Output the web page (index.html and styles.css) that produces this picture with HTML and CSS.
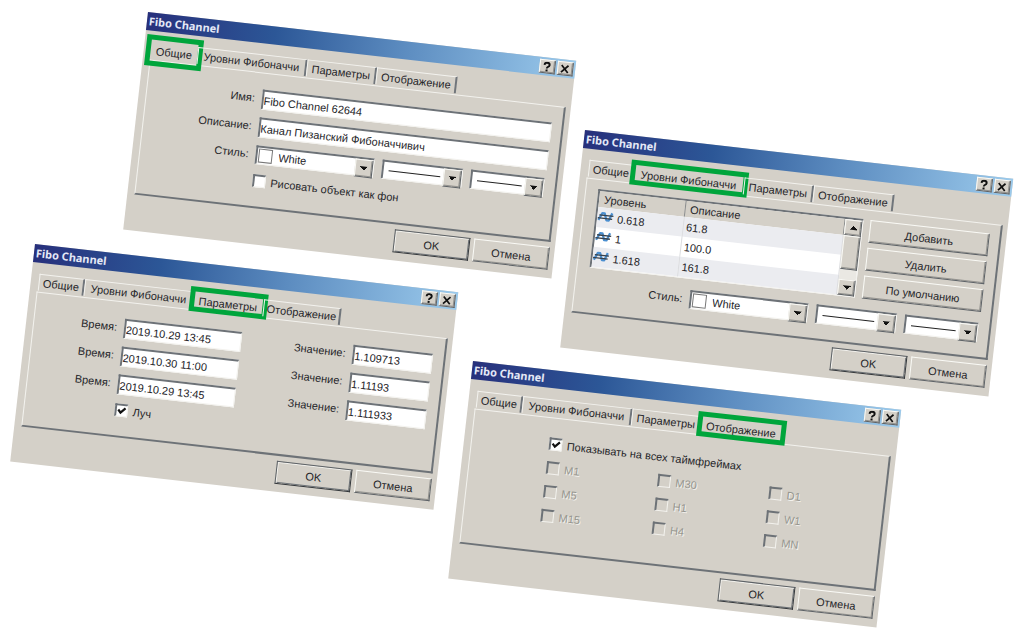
FILE: index.html
```html
<!DOCTYPE html>
<html lang="ru">
<head>
  <meta charset="UTF-8">
  <meta name="viewport" content="width=device-width, initial-scale=1.0">
  <title>Fibo Channel</title>
  <link rel="stylesheet" href="styles.css">
</head>
<body>
  <!-- Shared icons -->
  <svg class="sprite" aria-hidden="true">
    <symbol id="icon-help" viewBox="0 0 12 11">
      <path d="M3.5 3.6 Q3.5 1.2 6 1.2 Q8.6 1.2 8.6 3.3 Q8.6 4.6 7.2 5.2 Q6.1 5.8 6.1 7" fill="none" stroke="#111" stroke-width="1.9"/>
      <rect x="5.1" y="8" width="2" height="2" fill="#111"/>
    </symbol>
    <symbol id="icon-close" viewBox="0 0 12 11">
      <path d="M2.6 1.8 L9.4 9 M9.4 1.8 L2.6 9" fill="none" stroke="#111" stroke-width="1.7"/>
    </symbol>
    <symbol id="icon-level" viewBox="0 0 18 12">
      <path d="M1.5 10 L5 2.5 H7.5 L10 9.5 H12.5 L15.5 1.5" fill="none" stroke="#4a8fd0" stroke-width="2.4" stroke-linejoin="round"/>
      <path d="M2 4.6 H17 M0.5 7.8 H16" stroke="#37414c" stroke-width="1.4"/>
    </symbol>
  </svg>

  <main class="desktop">
    <!-- General -->
    <section class="dialog dialog-general">
      <header class="title-bar">
        <h2>Fibo Channel</h2>
        <button class="title-button" aria-label="Справка"><svg><use href="#icon-help"/></svg></button>
        <button class="title-button" aria-label="Закрыть"><svg><use href="#icon-close"/></svg></button>
      </header>
      <nav class="tabs">
        <button class="tab tab-1 active">Общие</button>
        <button class="tab tab-2">Уровни Фибоначчи</button>
        <button class="tab tab-3">Параметры</button>
        <button class="tab tab-4">Отображение</button>
      </nav>
      <div class="panel form">
        <label for="name">Имя:</label>
        <input class="field" id="name" type="text" value="Fibo Channel 62644">
        <label for="description">Описание:</label>
        <input class="field" id="description" type="text" value="Канал Пизанский Фибоначчивич">
        <label for="color-1">Стиль:</label>
        <div class="style-row">
          <span class="combo combo-color"><i class="swatch"></i><select id="color-1"><option>White</option></select></span>
          <span class="combo combo-line"><i class="line"></i><select aria-label="Тип линии"><option></option></select></span>
          <span class="combo combo-width"><i class="line"></i><select aria-label="Толщина"><option></option></select></span>
        </div>
        <label class="check"><input type="checkbox">Рисовать объект как фон</label>
      </div>
      <footer class="actions">
        <button class="button default">OK</button>
        <button class="button">Отмена</button>
      </footer>
    </section>

    <!-- Fibonacci levels -->
    <section class="dialog dialog-levels">
      <header class="title-bar">
        <h2>Fibo Channel</h2>
        <button class="title-button" aria-label="Справка"><svg><use href="#icon-help"/></svg></button>
        <button class="title-button" aria-label="Закрыть"><svg><use href="#icon-close"/></svg></button>
      </header>
      <nav class="tabs">
        <button class="tab tab-1">Общие</button>
        <button class="tab tab-2 active">Уровни Фибоначчи</button>
        <button class="tab tab-3">Параметры</button>
        <button class="tab tab-4">Отображение</button>
      </nav>
      <div class="panel">
        <div class="levels">
          <div class="list">
            <table>
              <thead>
                <tr><th>Уровень</th><th>Описание</th></tr>
              </thead>
              <tbody>
                <tr><td><svg class="level-icon"><use href="#icon-level"/></svg>0.618</td><td>61.8</td></tr>
                <tr><td><svg class="level-icon"><use href="#icon-level"/></svg>1</td><td>100.0</td></tr>
                <tr><td><svg class="level-icon"><use href="#icon-level"/></svg>1.618</td><td>161.8</td></tr>
              </tbody>
            </table>
            <div class="scrollbar">
              <button class="scroll-button up" aria-label="Вверх"></button>
              <div class="thumb"></div>
              <button class="scroll-button down" aria-label="Вниз"></button>
            </div>
          </div>
          <div class="level-buttons">
            <button class="button">Добавить</button>
            <button class="button">Удалить</button>
            <button class="button">По умолчанию</button>
          </div>
        </div>
        <div class="form">
          <label for="color-2">Стиль:</label>
          <div class="style-row">
            <span class="combo combo-color"><i class="swatch"></i><select id="color-2"><option>White</option></select></span>
            <span class="combo combo-line"><i class="line"></i><select aria-label="Тип линии"><option></option></select></span>
            <span class="combo combo-width"><i class="line"></i><select aria-label="Толщина"><option></option></select></span>
          </div>
        </div>
      </div>
      <footer class="actions">
        <button class="button default">OK</button>
        <button class="button">Отмена</button>
      </footer>
    </section>

    <!-- Parameters -->
    <section class="dialog dialog-params">
      <header class="title-bar">
        <h2>Fibo Channel</h2>
        <button class="title-button" aria-label="Справка"><svg><use href="#icon-help"/></svg></button>
        <button class="title-button" aria-label="Закрыть"><svg><use href="#icon-close"/></svg></button>
      </header>
      <nav class="tabs">
        <button class="tab tab-1">Общие</button>
        <button class="tab tab-2">Уровни Фибоначчи</button>
        <button class="tab tab-3 active">Параметры</button>
        <button class="tab tab-4">Отображение</button>
      </nav>
      <div class="panel params">
        <label for="time-1">Время:</label>
        <input class="field" id="time-1" type="text" value="2019.10.29 13:45">
        <label for="value-1">Значение:</label>
        <input class="field" id="value-1" type="text" value="1.109713">
        <label for="time-2">Время:</label>
        <input class="field" id="time-2" type="text" value="2019.10.30 11:00">
        <label for="value-2">Значение:</label>
        <input class="field" id="value-2" type="text" value="1.11193">
        <label for="time-3">Время:</label>
        <input class="field" id="time-3" type="text" value="2019.10.29 13:45">
        <label for="value-3">Значение:</label>
        <input class="field" id="value-3" type="text" value="1.111933">
        <label class="check"><input type="checkbox" checked>Луч</label>
      </div>
      <footer class="actions">
        <button class="button default">OK</button>
        <button class="button">Отмена</button>
      </footer>
    </section>

    <!-- Display -->
    <section class="dialog dialog-display">
      <header class="title-bar">
        <h2>Fibo Channel</h2>
        <button class="title-button" aria-label="Справка"><svg><use href="#icon-help"/></svg></button>
        <button class="title-button" aria-label="Закрыть"><svg><use href="#icon-close"/></svg></button>
      </header>
      <nav class="tabs">
        <button class="tab tab-1">Общие</button>
        <button class="tab tab-2">Уровни Фибоначчи</button>
        <button class="tab tab-3">Параметры</button>
        <button class="tab tab-4 active">Отображение</button>
      </nav>
      <div class="panel frames">
        <label class="check all"><input type="checkbox" checked>Показывать на всех таймфреймах</label>
        <label class="check"><input type="checkbox" disabled>M1</label>
        <label class="check"><input type="checkbox" disabled>M30</label>
        <label class="check"><input type="checkbox" disabled>D1</label>
        <label class="check"><input type="checkbox" disabled>M5</label>
        <label class="check"><input type="checkbox" disabled>H1</label>
        <label class="check"><input type="checkbox" disabled>W1</label>
        <label class="check"><input type="checkbox" disabled>M15</label>
        <label class="check"><input type="checkbox" disabled>H4</label>
        <label class="check"><input type="checkbox" disabled>MN</label>
      </div>
      <footer class="actions">
        <button class="button default">OK</button>
        <button class="button">Отмена</button>
      </footer>
    </section>
  </main>
</body>
</html>
```
FILE: styles.css
```css
* {
  margin: 0;
  padding: 0;
  box-sizing: border-box;
}

body {
  background: #fff;
}

body, button, input, select {
  font-family: "Liberation Sans", Arial, sans-serif;
  font-size: 11px;
  line-height: 14px;
  color: #26262a;
}

.sprite {
  display: none;
}

.desktop {
  position: relative;
  min-height: 100vh;
  overflow: hidden;
}

/* Windows */
.dialog {
  position: absolute;
  width: 431px;
  background: #d4d0c8;
  transform: rotate(6.5deg);
  transform-origin: 0 0;
}

.dialog-general { left: 148px; top: 12px; }
.dialog-levels { left: 585px; top: 130px; }
.dialog-params { left: 35px; top: 244px; width: 426px; }
.dialog-display { left: 473px; top: 361px; }

.title-bar {
  display: flex;
  align-items: center;
  gap: 2px;
  height: 18px;
  padding: 0 2px;
  background: linear-gradient(to right, #27307c, #2c5797 30%, #5c8cc0 60%, #9bcaec);
}

.title-bar h2 {
  flex: 1;
  font-family: "Noto Sans", sans-serif;
  font-size: 11px;
  line-height: 18px;
  font-weight: 700;
  color: #e4e8f6;
}

/* Raised controls */
.title-button, .scroll-button, .thumb, .button {
  background: #d4d0c8;
  border: 1px solid;
  border-color: #fafaf6 #5c6166 #5c6166 #fafaf6;
  box-shadow: inset -1px -1px #94938f;
}

.title-button {
  width: 16px;
  height: 14px;
}

.title-button svg {
  display: block;
  width: 13px;
  height: 11px;
}

/* Tabs */
.tabs {
  display: flex;
  align-items: flex-start;
  height: 29px;
  padding: 11px 0 0 8px;
}

.tab {
  position: relative;
  height: 17px;
  background: transparent;
  border: 0;
  border-top: 1px solid #f3f2ee;
  border-left: 1px solid #f3f2ee;
  border-right: 2px solid #70757b;
  white-space: nowrap;
}

.tab-1 { width: 46px; }
.tab-2 { width: 110px; }
.tab-3 { width: 70px; }
.tab-4 { width: 81px; }

.dialog-params .tab-4 {
  width: 78px;
}

.tab.active {
  border-color: transparent;
}

/* Green marker round the current tab */
.tab.active::after {
  content: "";
  position: absolute;
  inset: -6px -6px -3px -5px;
  border: 5px solid #00a53c;
}

.tab-1.active::after {
  inset: -8px -7px -7px -7px;
}

/* Panels */
.panel {
  height: 136px;
  margin: 0 5px 0 7px;
  padding: 16px 10px 0 12px;
  border: solid;
  border-width: 1px 2px 2px 1px;
  border-color: #f3f2ee #6d7277 #6d7277 #f3f2ee;
}

.form {
  display: grid;
  grid-template-columns: 96px 1fr;
  grid-auto-rows: 20px;
  gap: 8px 7px;
}

.form > label:not(.check), .params > label:not(.check) {
  text-align: right;
  line-height: 18px;
}

.form .check {
  grid-column: 2;
}

.field, .combo, .list {
  background: #fff;
  border: solid;
  border-width: 2px 1px 1px 2px;
  border-color: #6d7277 #f3f2ee #f3f2ee #6d7277;
}

.field {
  width: 100%;
  height: 20px;
}

.style-row {
  display: flex;
  gap: 8px;
}

.combo {
  position: relative;
  display: flex;
  align-items: center;
  height: 19px;
}

.combo-color { width: 119px; }
.combo-line { width: 81px; }
.combo-width { width: 74px; }

.combo select {
  width: 100%;
  height: 16px;
  padding-left: 21px;
  border: 0;
  background: transparent;
  appearance: none;
}

/* Drop-down arrow */
.combo::after {
  content: "";
  position: absolute;
  right: 0;
  top: 0;
  width: 16px;
  height: 16px;
  border: 1px solid;
  border-color: #fafaf6 #5c6166 #5c6166 #fafaf6;
  background: conic-gradient(from -45deg at 50% 100%, #111 90deg, transparent 0) center / 8px 4px no-repeat, #d4d0c8;
  box-shadow: inset -1px -1px #94938f;
  pointer-events: none;
}

.swatch {
  position: absolute;
  left: 1px;
  top: 1px;
  width: 14px;
  height: 14px;
  border: 1px solid #777;
}

.line {
  position: absolute;
  left: 5px;
  right: 21px;
  top: 8px;
  height: 1px;
  background: #222;
}

/* Check boxes */
.check {
  display: flex;
  align-items: center;
  gap: 5px;
  height: 15px;
}

.check input {
  width: 13px;
  height: 13px;
  appearance: none;
  background: #fff;
  border: solid;
  border-width: 2px 1px 1px 2px;
  border-color: #6d7277 #f3f2ee #f3f2ee #6d7277;
}

.check input:checked {
  background: #fff url("data:image/svg+xml,%3Csvg xmlns='http://www.w3.org/2000/svg' viewBox='0 0 10 10'%3E%3Cpath d='M1.5 4 L4 6.8 L8.6 2' fill='none' stroke='%23111' stroke-width='2.2'/%3E%3C/svg%3E");
}

.check input:disabled {
  background: #d4d0c8;
}

.check:has(:disabled) {
  color: #96968f;
  text-shadow: 1px 1px #f3f2ee;
}

/* Buttons */
.actions {
  display: flex;
  justify-content: flex-end;
  gap: 4px;
  padding: 5px 5px 8px;
}

.button {
  width: 76px;
  height: 23px;
}

.button.default {
  border-color: #5c6166 #33373b #33373b #5c6166;
  box-shadow: inset 1px 1px #f3f2ee, inset -1px -1px #6d7277;
}

/* Levels list */
.levels {
  display: flex;
  justify-content: space-between;
  margin: -7px 0 11px;
}

.list {
  display: flex;
  width: 267px;
  height: 79px;
}

.list table {
  flex: 1;
  border-collapse: collapse;
  table-layout: fixed;
}

.list th {
  height: 16px;
  padding-left: 5px;
  text-align: left;
  font-weight: 400;
  background: #d4d0c8;
  border-right: 1px solid #8b8d8e;
}

.list th:first-child {
  width: 86px;
}

.list td {
  height: 20px;
  padding-left: 3px;
  border-right: 1px solid #dcdde0;
}

.list td:first-child {
  padding-left: 0;
}

.list tbody tr:nth-child(odd) {
  background: #ebecf0;
}

.level-icon {
  width: 17px;
  height: 12px;
  margin-right: 3px;
  vertical-align: -1px;
}

.scrollbar {
  display: flex;
  flex-direction: column;
  width: 17px;
  background: #eae8e3;
}

.scroll-button {
  height: 16px;
}

.scroll-button.up {
  background: conic-gradient(from 135deg at 50% 0, #111 90deg, transparent 0) center / 8px 4px no-repeat, #d4d0c8;
}

.scroll-button.down {
  margin-top: auto;
  background: conic-gradient(from -45deg at 50% 100%, #111 90deg, transparent 0) center / 8px 4px no-repeat, #d4d0c8;
}

.thumb {
  height: 34px;
}

.level-buttons {
  display: flex;
  flex-direction: column;
  gap: 5px;
}

.level-buttons .button {
  width: 120px;
}

/* Parameters */
.params {
  display: grid;
  grid-template-columns: 71px 118px 98px 80px;
  grid-auto-rows: 20px;
  gap: 8px 7px;
}

.params .check {
  grid-column: 2;
}

/* Timeframes */
.frames {
  display: grid;
  grid-template-columns: repeat(3, 112px);
  grid-auto-rows: 15px;
  row-gap: 9px;
  padding: 18px 0 0 77px;
}

.frames .all {
  grid-column: 1 / -1;
}
```
